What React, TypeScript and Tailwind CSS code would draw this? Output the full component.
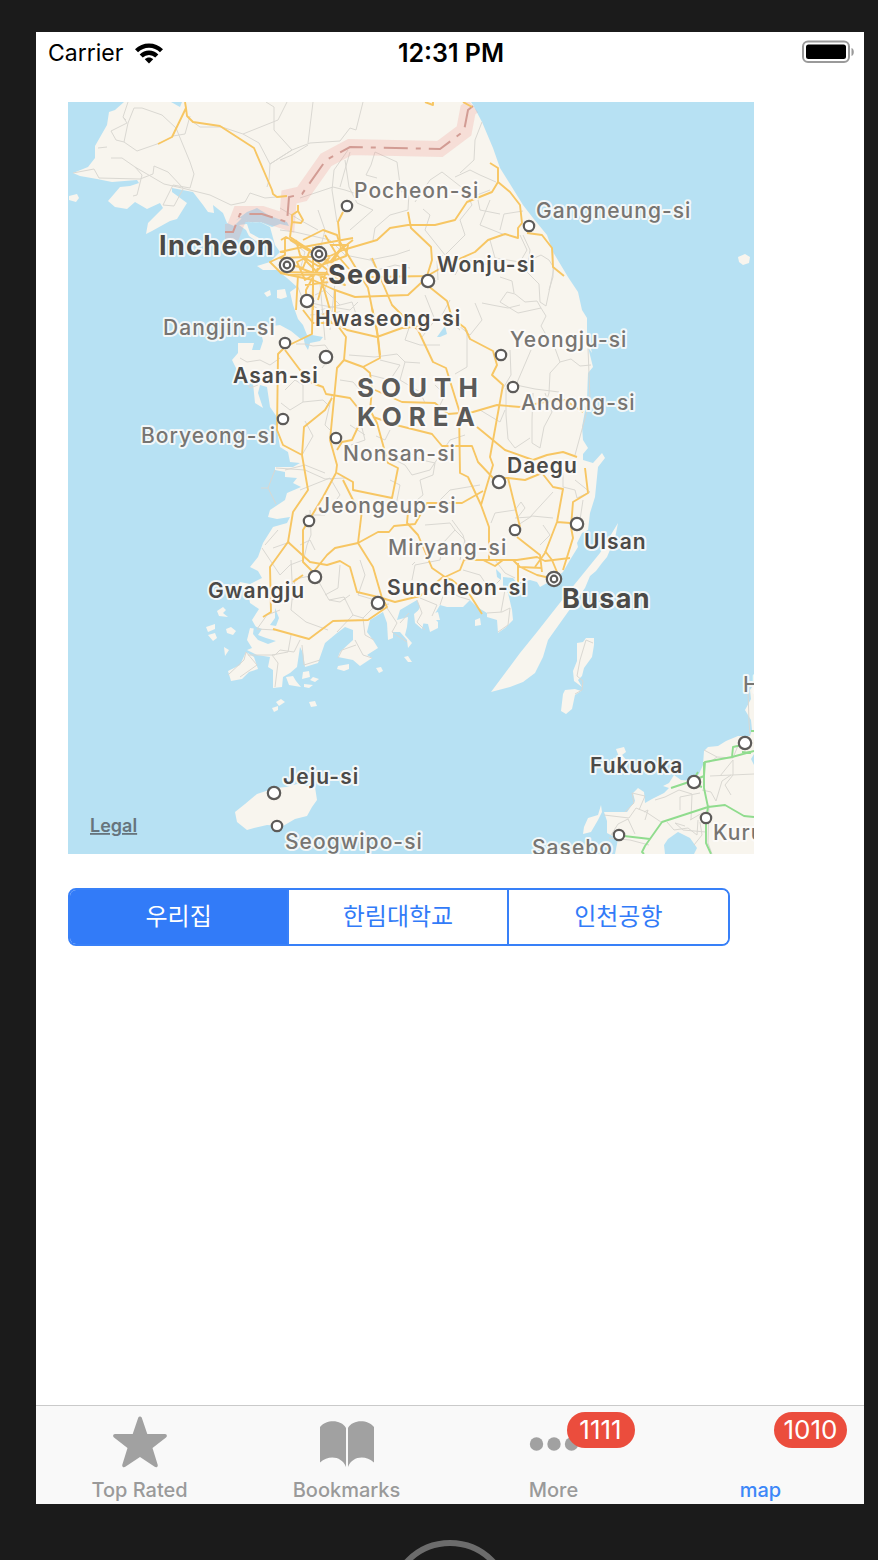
import { useState } from "react";

const LAND = [
  "M124 102L115 110L109 112L107 125L95 146L95 158L88 167L73 173L80 176L97 179L112 182L137 180L139 183L130 186L120 187L108 201L115 207L127 209L135 202L147 209L160 203L163 208L148 223L146 234L152 231L170 221L177 219L187 203L172 192L172 188L193 192L203 205L208 212L214 213L213 205L223 213L227 223L234 226L242 218L252 223L260 222L270 227L275 245L280 252L270 262L257 266L263 270L277 270L287 278L297 287L290 292L293 305L298 319L303 325L307 335L302 340L291 331L280 325L260 328L263 341L260 350L252 350L254 343L238 343L238 353L232 360L238 372L253 383L255 403L263 408L258 393L260 385L267 387L270 407L277 417L277 430L280 447L288 452L290 462L300 463L293 467L275 467L275 470L285 472L285 477L297 478L293 483L301 487L287 493L285 500L270 510L268 517L277 519L290 517L287 523L273 527L263 543L258 557L250 567L258 571L262 578L250 584L240 582L237 587L248 592L250 603L259 609L252 620L257 629L250 628L247 640L252 648L247 650L257 655L270 657L268 667L273 670L273 688L282 687L283 677L290 673L297 667L300 647L303 653L305 667L318 663L325 643L337 633L345 627L353 630L353 640L340 652L338 657L353 660L360 666L372 658L367 655L378 648L373 640L367 632L370 620L383 612L387 623L388 640L393 638L393 632L400 632L407 640L408 648L412 643L405 635L407 627L408 617L397 620L400 610L417 600L420 607L415 617L420 623L428 624L430 632L438 628L438 622L433 617L440 605L447 607L463 607L470 600L477 607L487 613L487 617L497 620L498 633L505 628L513 620L512 610L508 593L503 587L503 577L513 578L517 583L530 580L537 582L540 587L547 583L557 577L563 572L570 560L578 547L577 543L582 533L588 530L590 513L595 497L598 467L605 458L602 453L593 463L583 460L583 454L588 448L583 440L582 427L587 400L588 373L593 367L588 347L592 353L587 332L587 318L582 310L578 292L568 277L553 252L547 235L533 218L523 205L500 168L493 148L482 122L473 105L471 102Z",
  "M69 196L77 194L79 198L76 202L69 200Z",
  "M239 225L247 224L250 233L259 238L256 241L249 236L246 230Z",
  "M264 293L270 290L271 295L267 297ZM277 290L285 289L287 297L281 299L277 298Z",
  "M738 257L745 254L750 257L749 263L743 265L739 262Z",
  "M618 523L615 538L607 557L602 563L596 571L590 576L585 588L548 640L543 657L535 673L523 682L510 687L491 692L520 653L537 632L570 590L600 553Z",
  "M577 643L583 642L586 638L594 638L594 645L592 657L584 668L582 676L578 680L582 687L574 681L573 671L577 661Z",
  "M565 690L575 689L581 691L575 695L572 709L566 714L561 711L563 694Z",
  "M217 611L223 607L226 610L223 613L228 617L219 616ZM206 627L215 624L215 629L208 632ZM208 635L215 633L217 638L213 641ZM226 629L231 627L236 631L233 635L227 633ZM224 647L229 650L225 656Z",
  "M228 671L240 665L246 652L254 657L258 669L249 672L242 679L231 681Z",
  "M286 677L293 676L296 681L301 687L289 685ZM303 672L309 671L310 677L302 679ZM313 677L319 679L315 682L310 680ZM304 684L313 685L309 688L304 687Z",
  "M276 702L281 699L285 702L279 706ZM272 708L278 706L278 710L274 712ZM309 702L315 701L317 706L311 707Z",
  "M338 666L349 664L349 669L344 671L337 669ZM376 668L381 667L383 671L379 673ZM404 657L408 656L412 662L408 662Z",
  "M414 614L421 608L425 617L422 629L415 623ZM431 614L438 612L440 620L434 620ZM475 620L480 618L481 625L475 626Z",
  "M245 804L257 794L275 788L286 787L297 784L315 787L317 800L312 807L307 816L295 819L283 826L267 825L254 828L247 830L237 822L235 812Z",
  "M754 684L750 690L751 699L745 710L751 720L752 730L750 736L738 736L726 741L718 746L708 747L704 751L703 765L699 774L692 781L681 780L674 775L669 783L663 786L669 788L664 793L652 799L645 803L644 792L638 788L633 793L635 801L627 812L604 812L607 821L607 833L618 839L615 854L754 854Z",
  "M616 749L624 747L626 752L622 755L628 762L625 772L615 764L613 758L619 757Z",
  "M598 815L601 805L602 812L598 820L591 832L583 834L584 827L588 818Z",
];

const WATER = [
  "M171 102L182 102L180 107Z",
  "M235 221L247 212L257 208L270 216L287 222L289 226L280 224L272 227L260 222L252 223L240 218Z",
  "M254 626L262 629L258 635L266 638L276 641L268 644L258 640L253 634Z",
  "M275 608L279 618L276 626L270 625L275 618Z",
  "M303 335L312 335L323 337L320 341L310 343L308 350L305 345Z",
  "M437 337L442 330L445 326L447 334L440 337Z",
  "M664 845L668 839L678 832L690 838L697 848L694 854L665 854Z",
  "M751 759L754 754L754 765Z",
  "M496 569L501 574L501 580L497 577Z",
];

const MINOR = [
  "M128 102L123 117L127 123L111 131L116 140L124 142L128 123L134 108L142 108L162 115L176 128L190 162L194 174L190 188L173 185L163 205L174 206L183 189M124 142L137 151L160 143M123 117L126 120M98 148L107 147M111 158L122 158L135 167L164 184L182 188L210 195L231 205L245 202L250 193L265 198L287 196M73 173L94 169L99 178L140 179L153 174L154 166L168 172L183 188M135 167L142 175L137 195L133 196M176 128L173 136L185 134L190 116",
  "M266 102L274 107L274 130L292 150L270 164L269 180L267 187M243 134L278 120L287 102M193 122L200 127L222 127L243 134L259 143L270 164M270 164L292 150L310 143L340 141L350 128L356 130L363 102M313 102L308 143M280 160L292 155L308 145",
  "M340 187L350 152M348 150L334 170L332 190L337 222M300 198L333 187L345 190L360 195M371 165L375 152L397 162L401 192M371 165L366 175L377 178M345 160L349 187L357 203L373 210L350 230M280 208L300 220L318 230M409 192L408 210L390 215L375 228L373 240M401 192L410 190",
  "M423 209L430 215L425 230L445 255L465 235L460 220L472 205L465 190L442 172L430 180L415 202M455 177L470 170L480 175L496 182M482 122L475 140L474 160L460 173M490 200L480 225L505 235M500 214L480 210L477 195L490 190M520 235L527 250L520 262L495 258L490 240M443 255L437 261L438 280",
  "M500 230L504 214L523 211M523 235L530 250L527 272L539 284L540 302L546 306L554 268L549 260L541 255L530 260M500 302L507 292L515 294L525 302L537 301L541 308M500 302L518 313L541 308L546 316L541 326L549 340M553 252L553 277L549 290M500 277L512 281L514 293",
  "M315 295L325 290L340 305L352 302L358 320L370 325L395 315L410 325L405 340L420 345L440 345M300 300L320 305L350 310L358 302M320 283L325 340M335 283L330 330M310 315L340 312M425 295L435 320L422 337M450 300L442 315L460 330M475 303L482 320L470 335L458 325M482 303L492 305L508 308L520 305M455 275L465 258L480 265L500 262M370 258L377 270L395 265L410 268",
  "M280 230L295 232L330 240L345 255L370 260L395 255L410 250M318 210L325 230L320 250L330 270L325 290M290 240L305 252L300 270M297 285L303 300L320 310L340 305",
  "M349 355L375 357L397 354L405 362L420 363M467 330L467 367L455 374M510 350L511 375L502 390M531 350L516 385L535 389L559 392M552 340L560 362L550 373L549 393L545 405M560 362L571 359L580 366L591 365M588 348L589 374L590 400L575 455M506 388L506 415L508 439L515 448L530 438M533 393L532 420L532 443L540 448L544 427L552 412L545 393M480 410L500 422L505 410",
  "M240 358L247 362L260 360L270 365L280 358M296 344L305 344L313 346L325 345L332 355L322 368M303 385L303 402L290 410L281 403M303 402L323 400L330 407M305 421L313 436L302 455M332 395L325 425L330 430M285 390L295 380L303 385M245 378L250 388L258 385M276 468L305 470L325 479L345 478M285 470L305 465L325 473M275 470L268 488L276 504M261 488L268 488M300 490L330 478L340 495L325 515L305 515M310 510L311 535L307 545L303 562",
  "M360 420L365 440L351 445M390 430L385 440L376 436M375 450L405 465L412 475L430 470L440 455L450 440L465 435M405 450L422 460L435 463L433 475L420 480L423 495L405 510M350 425L365 435M390 480L400 485L395 510M430 510L450 490L480 485M360 390L353 382L340 380M380 360L400 365L390 380L370 375M405 362L400 380L420 392L425 403M435 385L445 395L440 405",
  "M425 525L450 523L455 530L443 543L440 560L415 565L412 580M455 530L465 540L460 560M467 550L463 535L452 520M515 518L530 517L553 492M491 523L495 513L515 510L521 502L525 508L518 517M518 525L532 516L553 518M575 480L590 492L577 498L575 490L563 487L563 473M583 500L580 520M540 545L550 535L543 525M300 545L310 540L315 550M262 548L270 560L280 575L290 565L303 560M273 548L290 542M265 545L278 530",
  "M295 579L292 600L291 610L306 622L328 630M295 579L315 575L329 600L344 597L353 615L337 632M344 597L345 600M350 595L340 602L329 600M291 560L293 600M291 635L288 652L272 655L278 663L275 687M302 645L304 665L320 660M248 655L275 655L280 650L294 652L300 640M325 595L338 588L340 565M360 560L365 575L358 595L375 600M353 615L363 618L375 606L389 604M356 645L342 650L338 658M355 640L363 655L372 658M363 618L365 635L374 640M228 675L244 660L246 652L257 665L240 677M280 610L267 615L257 629L275 630",
  "M387 608L397 623L392 632L407 642M400 623L409 613M417 600L422 613L417 622L425 630M432 616L437 605L420 598M440 605L445 590L460 597L470 600M412 565L415 562M487 613L502 612L510 608L508 625L498 632M501 612L505 590M495 560L505 573L515 578M463 570L480 575L490 590L500 580",
  "M577 676L580 660L586 640L593 643M577 676L583 681L582 690L575 694",
  "M704 750L717 757L733 758L741 738M717 757L710 762L704 762L704 780M702 790L711 792L716 801L722 781L731 775M720 776L733 760L733 775L725 785L731 795M710 776L754 774M700 793L695 794L680 797L680 810M655 800L665 797L679 790L692 794L691 820M690 820L704 812M632 793L645 796L639 810M632 793L634 803L625 812M604 815L629 818L636 808L646 812L661 822M611 835L618 824L628 819L635 834M644 812L648 810L645 820M609 838L630 840L649 845M667 822L674 830L688 828L697 835L698 820M709 805L708 843L712 854M700 822L702 835L694 845M748 690L749 722L750 734M685 826L675 823L683 830L706 832",
];

const ROADS = [
  "M185 102L186 108L172 137L158 144M186 108L187 116L193 122L220 126L254 148L272 190L273 194L277 197L287 196M425 102L433 105L433 102M463 102L472 107",
  "M298 205L298 211L303 220L301 223L292 222L292 215L298 211M292 222L290 237L310 250",
  "M343 212L338 222L340 242L348 255L368 288L372 308L378 337L380 355",
  "M330 256L343 250L377 240L390 228L408 225L435 225L455 220L467 202L492 192L498 182L498 168L490 163M498 182L510 192L520 205L522 223L518 228L518 238L505 234L488 240L475 252L450 263L427 276",
  "M408 212L411 228L431 247L432 260L427 276M330 279L373 277L427 276",
  "M527 233L542 235L552 248L553 267L564 276",
  "M427 285L447 301L452 318L465 328L470 339L493 351L497 365L492 375L503 385L490 457L493 465L481 505L489 527L489 560",
  "M422 282L408 295L355 297L335 290L313 280L280 273",
  "M372 258L392 305L402 315L418 330L433 362L446 368L459 410L460 473L468 477L481 505",
  "M303 310L313 323L335 323L347 330L377 337L402 328L422 326",
  "M335 290L335 322L346 337L344 360L337 368L330 440L337 465L336 473L323 497L303 530L303 562L313 572",
  "M344 360L363 367L380 358L377 330L372 308M363 367L370 373L372 390L370 410L358 427L352 440L342 442L337 450",
  "M313 283L312 334L285 347L278 354L277 430L283 445L302 455L308 490L293 512L288 542L270 567L271 612L263 617",
  "M285 350L300 370L312 383L323 387L326 394L350 398L358 408L370 418",
  "M332 398L325 410L304 427L302 455",
  "M375 390L402 402L435 403L448 414L473 412L497 405L520 407M520 407L545 402L565 400L583 412",
  "M373 417L400 426L432 434L442 446L472 446L478 462L495 480M370 410L377 423L388 463L398 468L392 498L353 490L353 482L337 473",
  "M477 427L505 450L533 460L547 455L563 452L577 457",
  "M343 480L353 500L362 510L358 543L373 567L382 598",
  "M315 570L327 555L335 548L358 543L378 532L389 532L394 526L415 524L427 503L462 503L483 491",
  "M408 512L407 523L418 535L432 568L445 577L460 570L464 560L517 560L537 557L545 561L570 558",
  "M288 542L310 562L327 565L340 561L350 567L357 592L378 597M293 582L303 575",
  "M273 629L309 639L333 621L368 620L387 607L382 598L395 602L420 596L443 577L452 580L470 595L482 614",
  "M483 560L495 566L503 560M513 560L520 567L542 568M518 566L537 575L550 578M518 583L518 563M517 537L540 555L542 572M545 551L552 560L557 572",
  "M499 478L508 478L520 527M508 478L525 480L542 473L553 487L563 489L557 522L545 553L535 567M557 522L570 523M585 468L588 493L573 502L571 527L573 538L563 570",
  "M281 240L286 237L310 250L340 268M280 252L298 248L353 238M280 258L330 256M285 237L285 255L270 262L280 272L330 273M303 240L323 230L337 235L341 248L330 262L318 266L305 258L297 262L305 280L313 275L330 257M318 268L306 290L306 303M310 250L303 268L287 264M300 268L345 285L325 268L315 260M330 245L348 245L346 256L330 262M296 240L300 255L320 275L330 310L323 315L335 325M325 235L337 255L350 270M353 240L340 250L325 275L318 300M298 275L296 310M288 275L335 274M305 285L345 280M313 245L313 310M290 240L325 260",
];

const GREENS = [
  "M671 788L692 781L704 776L705 762L732 757L754 751M732 757L733 747L742 745M704 762L704 788L708 807L706 820L706 843L711 854M708 807L725 805L744 816L754 817M708 807L662 822L645 846L642 852L644 854M624 836L650 839M692 782L698 772M693 784L702 787M742 752L751 753M751 731L754 731",
];

type Label = [string, number, number];

const CITIES: Label[] = [
  ["Wonju-si", 437, 272],
  ["Hwaseong-si", 315, 326],
  ["Asan-si", 233, 383],
  ["Daegu", 507, 473],
  ["Ulsan", 584, 549],
  ["Gwangju", 208, 598],
  ["Suncheon-si", 387, 595],
  ["Jeju-si", 283, 784],
  ["Fukuoka", 590, 773],
];

const TOWNS: Label[] = [
  ["Pocheon-si", 354, 198],
  ["Gangneung-si", 536, 218],
  ["Dangjin-si", 163, 335],
  ["Yeongju-si", 510, 347],
  ["Andong-si", 521, 410],
  ["Boryeong-si", 141, 443],
  ["Nonsan-si", 343, 461],
  ["Jeongeup-si", 318, 513],
  ["Miryang-si", 388, 555],
  ["Seogwipo-si", 285, 849],
  ["Sasebo", 532, 855],
  ["Kurume", 713, 840],
  ["Hagi", 743, 692],
];

const METROS: Label[] = [
  ["Incheon", 159, 255],
  ["Seoul", 328, 284],
  ["Busan", 562, 608],
];

const LARGE_PINS = [[428, 281], [307, 301], [326, 357], [499, 482], [577, 524], [315, 577], [378, 603], [274, 793], [694, 782], [745, 743]];
const SMALL_PINS = [[347, 206], [529, 226], [285, 343], [501, 355], [513, 387], [283, 419], [336, 438], [309, 521], [515, 530], [277, 826], [706, 818], [619, 835]];
const METRO_PINS = [[287, 265], [319, 254], [554, 579]];

const BORDER = "M473 106L468 110L464 131L440 149L350 147L326 160L302 194L289 197L287 222L262 214L240 214L233 232L225 232";

function KoreaMap() {
  return (
    <svg viewBox="68 102 686 752" className="block h-auto w-full max-w-[686px] bg-[#b7e1f3]" role="group" aria-label="Map of South Korea">
      <g fill="#f8f5ee">
        {LAND.map((d) => <path key={d} d={d} />)}
      </g>
      <g fill="#b7e1f3">
        {WATER.map((d) => <path key={d} d={d} />)}
      </g>
      <g fill="none" stroke="#dad8d2" strokeWidth="1" strokeLinejoin="round">
        {MINOR.map((d) => <path key={d} d={d} />)}
      </g>
      <path d={BORDER} fill="none" stroke="#ee9a92" strokeOpacity="0.25" strokeWidth="16" />
      <path d={BORDER} fill="none" stroke="#d29c94" strokeWidth="2" strokeDasharray="24 8 5 8" />
      <g fill="none" stroke="#f7c663" strokeWidth="1.9" strokeLinejoin="round">
        {ROADS.map((d) => <path key={d} d={d} />)}
      </g>
      <g fill="none" stroke="#90dc8e" strokeWidth="1.9" strokeLinejoin="round">
        {GREENS.map((d) => <path key={d} d={d} />)}
      </g>
      <g fill="#fff" stroke="#5d5b59" strokeWidth="2.2">
        {LARGE_PINS.map(([x, y]) => <circle key={`${x}-${y}`} cx={x} cy={y} r="6.2" />)}
        {SMALL_PINS.map(([x, y]) => <circle key={`${x}-${y}`} cx={x} cy={y} r="5.2" />)}
        {METRO_PINS.map(([x, y]) => (
          <g key={`${x}-${y}`}>
            <circle cx={x} cy={y} r="7.2" />
            <circle cx={x} cy={y} r="3.3" />
          </g>
        ))}
      </g>
      <g stroke="#fdfcfa" strokeOpacity="0.85" strokeWidth="4" strokeLinejoin="round" paintOrder="stroke">
        <g fill="#777572" className="text-[21px] font-medium tracking-wider">
          {TOWNS.map(([name, x, y]) => <text key={name} x={x} y={y}>{name}</text>)}
        </g>
        <g fill="#4b4a48" className="text-[21px] font-semibold tracking-wider">
          {CITIES.map(([name, x, y]) => <text key={name} x={x} y={y}>{name}</text>)}
        </g>
        <g fill="#4b4a48" className="text-[27px] font-bold tracking-wider">
          {METROS.map(([name, x, y]) => <text key={name} x={x} y={y}>{name}</text>)}
        </g>
        <g fill="#5a5a59" className="text-[26px] font-bold tracking-[7px]">
          <text x="357" y="397">SOUTH</text>
          <text x="357" y="426">KOREA</text>
        </g>
      </g>
      <a href="#legal">
        <text x="90" y="832" fill="#66747c" className="text-[18px] font-semibold underline">Legal</text>
      </a>
    </svg>
  );
}

function WifiIcon() {
  return (
    <svg viewBox="0 0 28 21" className="h-[21px] w-7" aria-hidden="true">
      <g fill="none" stroke="#000" strokeWidth="4.4">
        <path d="M1.5 7.800C8.500 .9 19.500 .9 26.500 7.800" />
        <path d="M6.200 13C10.600 8.700 17.400 8.700 21.800 13" />
      </g>
      <path d="M9.800 16.200C12.200 14 15.800 14 18.200 16.200L14 20.500Z" />
    </svg>
  );
}

function BatteryIcon() {
  return (
    <svg viewBox="0 0 52 24" className="h-6 w-[52px]" role="img" aria-label="Battery full">
      <rect x="1" y="1.500" width="46" height="20.500" rx="5" fill="none" stroke="#9a9a9a" strokeWidth="2" />
      <rect x="4" y="4.500" width="40" height="14.500" rx="2.500" />
      <path d="M49.500 8C52.600 9 52.600 15 49.500 16Z" fill="#9a9a9a" />
    </svg>
  );
}

function StarIcon() {
  return (
    <svg viewBox="0 0 54 52" className="h-[52px] w-[54px]" fill="#a1a1a1" aria-hidden="true">
      <path d="M25.300 1.600C25.900 .1 28.100 .1 28.700 1.600L34.300 18H52C54 18 54.500 20.400 53 21.600L39.500 32L44.700 48.800C45.200 50.800 43.300 52 41.700 50.800L27 41L12.300 50.800C10.700 52 8.800 50.800 9.300 48.800L14.500 32L1 21.600C-.5 20.400 0 18 2 18H19.700Z" />
    </svg>
  );
}

function BookIcon() {
  return (
    <svg viewBox="0 0 54 46" className="mt-1 h-[46px] w-[54px]" fill="#a1a1a1" aria-hidden="true">
      <path d="M0 6C6-1.500 21-2 26 7V46C22 35.500 9 33.500 0 41.500Z" />
      <path d="M54 6C48-1.500 33-2 28 7V46C32 35.500 45 33.500 54 41.500Z" />
    </svg>
  );
}

function DotsIcon() {
  return (
    <svg viewBox="0 0 50 14" className="mt-1 h-3.5 w-[50px]" fill="#a1a1a1" aria-hidden="true">
      <circle cx="7.500" cy="7" r="6.700" />
      <circle cx="25" cy="7" r="6.700" />
      <circle cx="42.500" cy="7" r="6.700" />
    </svg>
  );
}

const PLACES = ["우리집", "한림대학교", "인천공항"];

const TABS = [
  { name: "Top Rated", icon: <StarIcon />, badge: "" },
  { name: "Bookmarks", icon: <BookIcon />, badge: "" },
  { name: "More", icon: <DotsIcon />, badge: "1111" },
  { name: "map", icon: null, badge: "1010" },
];

export default function App() {
  const [place, setPlace] = useState(0);
  const [tab, setTab] = useState(3);

  return (
    <div className="flex h-screen min-h-[1100px] flex-col overflow-hidden bg-[#1b1b1b] pt-8 pr-3.5 pl-9 font-['Inter','Noto_Sans_CJK_KR',sans-serif]">
      <div className="flex flex-1 flex-col bg-white">
        <header className="grid h-[70px] grid-cols-3 items-start pt-2 pr-2.5 pl-3">
          <div className="flex items-center gap-3 text-[23px] leading-[26px] text-black">
            <span>Carrier</span>
            <WifiIcon />
          </div>
          <time className="text-center text-[25px] leading-[26px] font-semibold text-black">12:31 PM</time>
          <div className="flex justify-end">
            <BatteryIcon />
          </div>
        </header>

        <main className="flex flex-1 flex-col gap-[34px] px-8">
          <KoreaMap />
          <div role="group" aria-label="Place" className="grid h-[58px] w-full max-w-[662px] grid-cols-3 divide-x-2 divide-[#3880f8] overflow-hidden rounded-lg border-2 border-[#3880f8]">
            {PLACES.map((name, i) => (
              <button
                key={name}
                type="button"
                aria-pressed={place === i}
                onClick={() => setPlace(i)}
                className={`text-[24px] leading-8 ${place === i ? "bg-[#327bf8] text-white" : "bg-white text-[#327bf8]"}`}
              >
                {name}
              </button>
            ))}
          </div>
        </main>

        <nav aria-label="Tabs" className="grid h-[99px] grid-cols-4 border-t border-[#cacaca] bg-[#f9f9f9]">
          {TABS.map((item, i) => (
            <button
              key={item.name}
              type="button"
              aria-current={tab === i ? "page" : undefined}
              onClick={() => setTab(i)}
              className={`flex flex-col items-center pt-2 text-[20px] leading-6 font-medium ${tab === i ? "text-[#3d87f8]" : "text-[#9a9a9a]"}`}
            >
              <span className="relative flex h-14 w-[54px] items-center justify-center">
                {item.icon}
                {item.badge && (
                  <span className="absolute -top-0.5 left-10 flex h-9 min-w-[68px] items-center justify-center rounded-full bg-[#eb4d3d] px-2.5 text-[26px] leading-8 font-normal text-white">
                    {item.badge}
                  </span>
                )}
              </span>
              <span className="mt-2">{item.name}</span>
            </button>
          ))}
        </nav>
      </div>

      <footer className="flex h-14 shrink-0 items-start justify-center pt-9">
        <button type="button" aria-label="Home" className="size-[124px] shrink-0 rounded-full border-6 border-[#6c6c6c]" />
      </footer>
    </div>
  );
}
